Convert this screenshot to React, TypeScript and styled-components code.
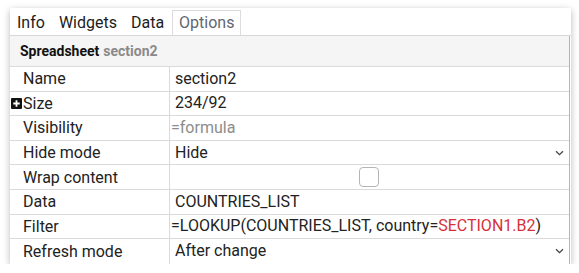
import styled, { createGlobalStyle } from "styled-components";

const GlobalStyle = createGlobalStyle`
    body {
        margin: 0;
        background: #ffffff;
        font-family: Roboto, "Liberation Sans", sans-serif;
    }
`;

type Row = {
    label: string;
    value?: React.ReactNode;
    kind?: "text" | "input" | "select" | "check";
    expandable?: boolean;
};

const Chevron = () => (
    <svg width="9" height="6" viewBox="0 0 9 6">
        <path d="M1 1.2 L4.5 4.6 L8 1.2" fill="none" stroke="#444" strokeWidth="1.3" />
    </svg>
);

const PlusIcon = () => (
    <svg width="11" height="11" viewBox="0 0 11 11">
        <rect x="0" y="0" width="11" height="11" rx="1" fill="#111" />
        <path d="M5.5 2.3 V8.7 M2.3 5.5 H8.7" stroke="#fff" strokeWidth="1.8" />
    </svg>
);

const App: React.FC = () => {
    const tabs = ["Info", "Widgets", "Data", "Options"];

    const rows: Row[] = [
        { label: "Name", value: "section2" },
        { label: "Size", value: "234/92", expandable: true },
        { label: "Visibility", value: <Muted>=formula</Muted>, kind: "input" },
        { label: "Hide mode", value: "Hide", kind: "select" },
        { label: "Wrap content", kind: "check" },
        { label: "Data", value: "COUNTRIES_LIST" },
        {
            label: "Filter",
            kind: "input",
            value: (
                <>
                    =LOOKUP(COUNTRIES_LIST, country=<Ref>SECTION1.B2</Ref>)
                </>
            ),
        },
        { label: "Refresh mode", value: "After change", kind: "select" },
    ];

    return (
        <>
            <GlobalStyle />
            <Panel>
                <TabBar>
                    {tabs.map((t) => (
                        <Tab key={t} $active={t === "Options"}>
                            {t}
                        </Tab>
                    ))}
                </TabBar>
                <Body>
                    <Caption>
                        <b>Spreadsheet</b>
                        <CaptionName>section2</CaptionName>
                    </Caption>
                    {rows.map((r) => (
                        <PropRow key={r.label}>
                            <Label $expandable={!!r.expandable}>
                                {r.expandable && <PlusIcon />}
                                {r.label}
                            </Label>
                            <Value $kind={r.kind ?? "text"}>
                                {r.kind === "check" ? <CheckBox /> : <ValueText>{r.value}</ValueText>}
                                {r.kind === "select" && <Chevron />}
                            </Value>
                        </PropRow>
                    ))}
                </Body>
            </Panel>
        </>
    );
};

// Styled Components

const Panel = styled.div`
    margin: 8px 0 0 10px;
    width: 561px;
    height: 256px;
    background: #ffffff;
    box-shadow: 0 2px 7px rgba(0, 0, 0, 0.28);
    display: flex;
    flex-direction: column;
    overflow: hidden;
`;

const TabBar = styled.div`
    display: flex;
    align-items: flex-end;
    height: 28px;
    box-sizing: border-box;
    border-bottom: 1px solid #d8d8d8;
`;

const Tab = styled.div<{ $active: boolean }>`
    height: 25px;
    box-sizing: border-box;
    display: flex;
    align-items: center;
    padding: 0 6px 1px;
    margin-left: ${(p) => (p.$active ? "1px" : "0")};
    border: 1px solid ${(p) => (p.$active ? "#dcdcdc" : "transparent")};
    border-bottom: none;
    font-size: 16px;
    color: ${(p) => (p.$active ? "#5f6670" : "#1c1c1c")};
`;

const Body = styled.div`
    flex: 1;
    margin-right: 1px;
    border-right: 1px solid #b4b4b4;
    display: flex;
    flex-direction: column;
`;

const Caption = styled.div`
    height: 31px;
    box-sizing: border-box;
    background: #f5f5f5;
    border-bottom: 1px solid #dadada;
    display: flex;
    align-items: center;
    padding-left: 10px;
    font-size: 14px;
    color: #111;
`;

const CaptionName = styled.span`
    margin-left: 4px;
    color: #8a8a8a;
    font-weight: 700;
`;

const PropRow = styled.div`
    display: grid;
    grid-template-columns: 160px 1fr;
    height: 24.6px;
    box-sizing: border-box;
    border-bottom: 1px solid #dadada;
    font-size: 16px;
    color: #222;

    &:last-child {
        border-bottom: none;
    }
`;

const Label = styled.div<{ $expandable: boolean }>`
    display: flex;
    align-items: center;
    gap: 1px;
    padding-left: ${(p) => (p.$expandable ? "1px" : "13px")};
    border-right: 1px solid #dadada;
    white-space: nowrap;
`;

const Value = styled.div<{ $kind: string }>`
    display: flex;
    align-items: center;
    justify-content: ${(p) => (p.$kind === "check" ? "center" : "space-between")};
    padding-left: ${(p) => (p.$kind === "input" ? "1px" : "5px")};
    padding-right: ${(p) => (p.$kind === "check" ? "7px" : "5px")};
    white-space: nowrap;
    overflow: hidden;
`;

const ValueText = styled.span`
    line-height: 1;
`;

const Muted = styled.span`
    color: #8c8c8c;
`;

const Ref = styled.span`
    color: #d8303a;
`;

const CheckBox = styled.div`
    width: 18px;
    height: 18px;
    border: 1px solid #b5b5b5;
    border-radius: 4px;
    background: #fff;
`;

export default App;
